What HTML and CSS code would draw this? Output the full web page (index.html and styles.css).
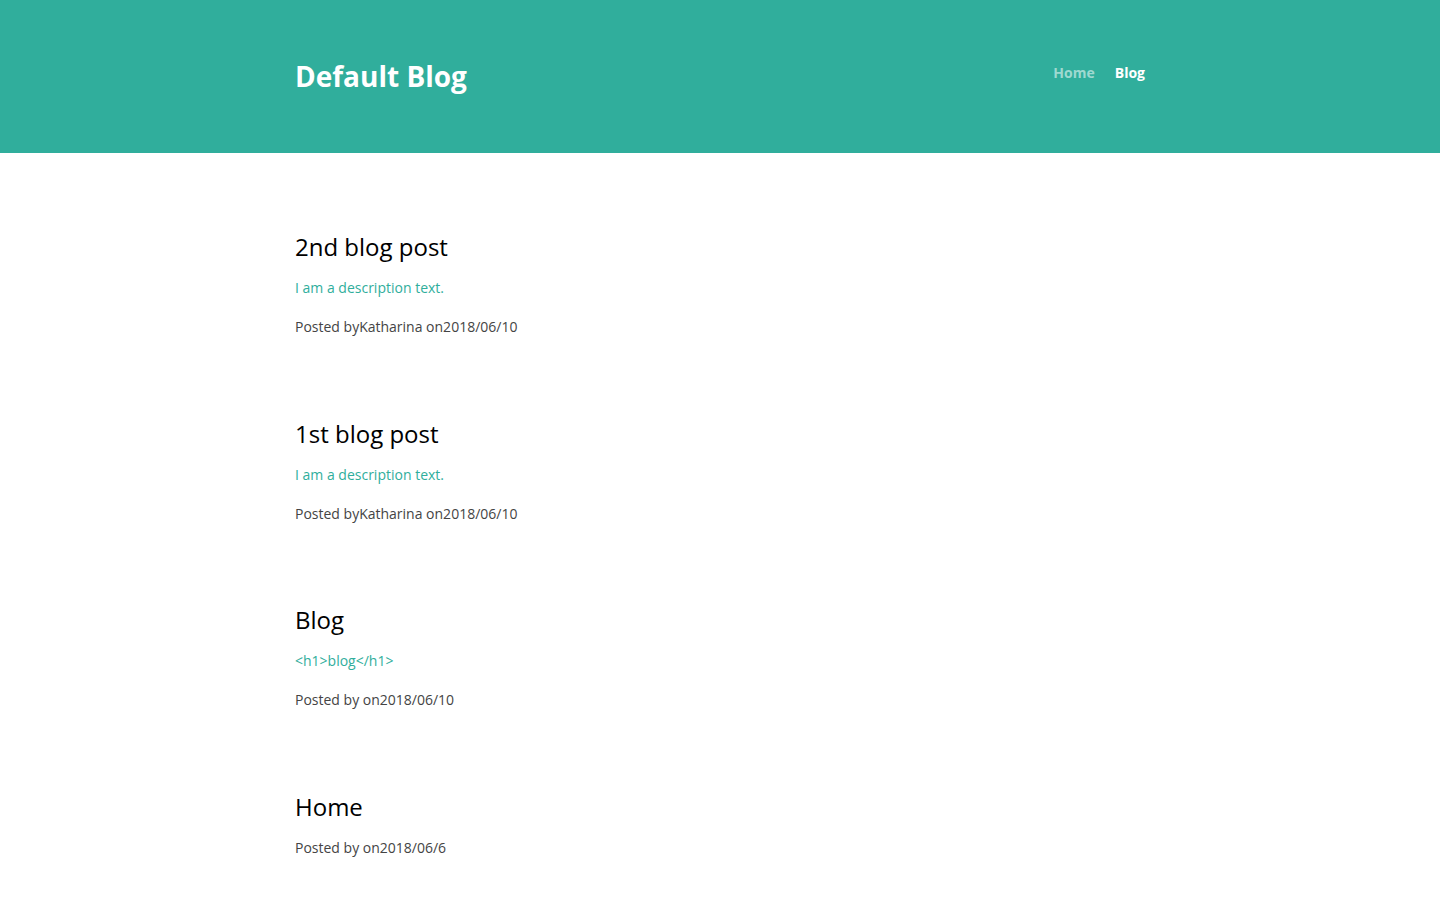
FILE: index.html
```html
<!DOCTYPE html>
<html lang="en">
<head>
<meta charset="utf-8">
<title>Default Blog</title>
<link rel="stylesheet" href="styles.css">
</head>
<body>
<header class="site-header">
  <div class="container header-inner">
    <a class="brand" href="#">Default Blog</a>
    <nav class="nav">
      <a class="nav-link" href="#">Home</a>
      <a class="nav-link active" href="#">Blog</a>
    </nav>
  </div>
</header>
<main class="container posts">
  <article class="post">
    <h2 class="post-title">2nd blog post</h2>
    <p class="post-desc">I am a description text.</p>
    <p class="post-meta">Posted byKatharina on2018/06/10</p>
  </article>
  <article class="post">
    <h2 class="post-title">1st blog post</h2>
    <p class="post-desc">I am a description text.</p>
    <p class="post-meta">Posted byKatharina on2018/06/10</p>
  </article>
  <article class="post">
    <h2 class="post-title">Blog</h2>
    <p class="post-desc">&lt;h1&gt;blog&lt;/h1&gt;</p>
    <p class="post-meta">Posted by on2018/06/10</p>
  </article>
  <article class="post">
    <h2 class="post-title">Home</h2>
    <p class="post-meta">Posted by on2018/06/6</p>
  </article>
</main>
</body>
</html>
```
FILE: styles.css
```css
* { box-sizing: border-box; }
html, body { margin: 0; padding: 0; }
body {
  font-family: "Open Sans", "Noto Sans", sans-serif;
  background: #ffffff;
  color: #000;
}
a { text-decoration: none; }
.container {
  width: 850px;
  margin: 0 auto;
}
.site-header {
  background: #30ae9c;
  height: 153px;
}
.header-inner {
  display: flex;
  justify-content: space-between;
  align-items: flex-start;
  padding-top: 56px;
}
.brand {
  color: #ffffff;
  font-size: 28px;
  font-weight: 700;
  line-height: 40px;
}
.nav {
  display: flex;
  gap: 20px;
  padding-top: 6px;
}
.nav-link {
  color: rgba(255, 255, 255, 0.55);
  font-size: 14px;
  font-weight: 700;
  line-height: 22px;
}
.nav-link.active { color: #ffffff; }
.posts {
  padding-top: 79px;
  padding-bottom: 20px;
}
.post { margin-bottom: 81.5px; }
.post-title {
  margin: 0;
  font-size: 24px;
  font-weight: 400;
  line-height: 30px;
  color: #000;
}
.post-desc {
  margin: 16px 0 0;
  font-size: 14px;
  line-height: 20px;
  color: #30ae9c;
}
.post-meta {
  margin: 19px 0 0;
  font-size: 14px;
  line-height: 20px;
  color: #444;
}
.post-title + .post-meta { margin-top: 16px; }
```
